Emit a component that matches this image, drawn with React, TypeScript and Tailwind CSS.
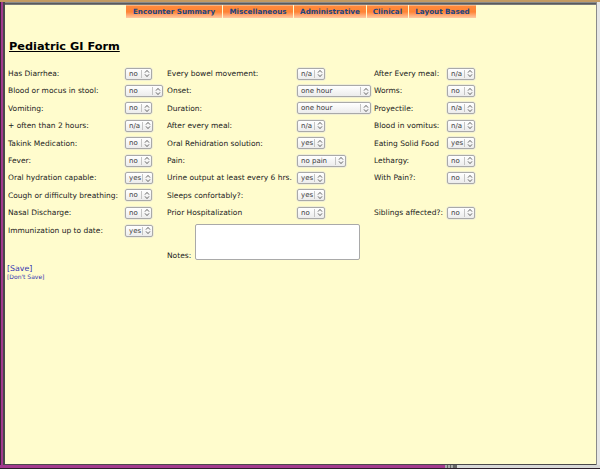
import React from "react";

const font = "font-['DejaVu_Sans',sans-serif]";

const tabs = [
  { label: "Encounter Summary", w: "w-[96px]" },
  { label: "Miscellaneous", w: "w-[70px]" },
  { label: "Administrative", w: "w-[72px]" },
  { label: "Clinical", w: "w-[41px]" },
  { label: "Layout Based", w: "w-[67px]" },
];

type Cell = { label: string; value: string; w: string } | null;

const rows: Cell[][] = [
  [
    { label: "Has Diarrhea:", value: "no", w: "w-[27px]" },
    { label: "Every bowel movement:", value: "n/a", w: "w-[28px]" },
    { label: "After Every meal:", value: "n/a", w: "w-[28px]" },
  ],
  [
    { label: "Blood or mocus in stool:", value: "no", w: "w-[38px]" },
    { label: "Onset:", value: "one hour", w: "w-[74px]" },
    { label: "Worms:", value: "no", w: "w-[28px]" },
  ],
  [
    { label: "Vomiting:", value: "no", w: "w-[27px]" },
    { label: "Duration:", value: "one hour", w: "w-[74px]" },
    { label: "Proyectile:", value: "n/a", w: "w-[28px]" },
  ],
  [
    { label: "+ often than 2 hours:", value: "n/a", w: "w-[28px]" },
    { label: "After every meal:", value: "n/a", w: "w-[28px]" },
    { label: "Blood in vomitus:", value: "n/a", w: "w-[28px]" },
  ],
  [
    { label: "Takink Medication:", value: "no", w: "w-[27px]" },
    { label: "Oral Rehidration solution:", value: "yes", w: "w-[28px]" },
    { label: "Eating Solid Food", value: "yes", w: "w-[28px]" },
  ],
  [
    { label: "Fever:", value: "no", w: "w-[27px]" },
    { label: "Pain:", value: "no pain", w: "w-[49px]" },
    { label: "Lethargy:", value: "no", w: "w-[28px]" },
  ],
  [
    { label: "Oral hydration capable:", value: "yes", w: "w-[28px]" },
    { label: "Urine output at least every 6 hrs.", value: "yes", w: "w-[28px]" },
    { label: "With Pain?:", value: "no", w: "w-[28px]" },
  ],
  [
    { label: "Cough or difficulty breathing:", value: "no", w: "w-[27px]" },
    { label: "Sleeps confortably?:", value: "yes", w: "w-[28px]" },
    null,
  ],
  [
    { label: "Nasal Discharge:", value: "no", w: "w-[27px]" },
    { label: "Prior Hospitalization", value: "no", w: "w-[28px]" },
    { label: "Siblings affected?:", value: "no", w: "w-[28px]" },
  ],
];

function Chevrons() {
  return (
    <svg width="6" height="9" viewBox="0 0 6 9" fill="none" stroke="#555" strokeWidth="0.9">
      <path d="M1 3.6 L3 1.4 L5 3.6" />
      <path d="M1 5.4 L3 7.6 L5 5.4" />
    </svg>
  );
}

function Select({ value, w }: { value: string; w: string }) {
  return (
    <div
      className={`${w} flex h-[12px] items-center rounded-[2px] border border-[#a9a9a9] bg-gradient-to-b from-white to-[#ececec] shadow-[0_0_0_0.5px_#e0e0e0]`}
    >
      <span className="flex-1 truncate pl-[3px] text-[7px] leading-[10px] text-[#3a3a3a]">{value}</span>
      <span className="h-[8px] w-px bg-[#c4c4c4]" />
      <span className="flex w-[9px] justify-center">
        <Chevrons />
      </span>
    </div>
  );
}

export default function App() {
  return (
    <div className={`${font} flex h-[469px] w-[600px] flex-col overflow-hidden bg-[#2b2b2b]`}>
      <div className="h-[2px] bg-[#c39a62]" />
      <div className="flex min-h-0 flex-1">
        <div className="w-px bg-[#3a2638]" />
        <div className="w-[2px] bg-[#a33a8e]" />
        <div className="w-[2px] bg-[#4a4a4a]" />
        <div className="flex min-w-0 flex-1 flex-col">
          <div className="h-px bg-[#8a8a8a]" />
          <div className="h-px bg-[#5a5a5a]" />
          <div className="h-px bg-[#7a7a7a]" />
          <div className="min-h-0 flex-1 bg-[#fffccd] px-[3px]">
            <div className="flex h-[13px] justify-center gap-px pl-[1px]">
              {tabs.map((t) => (
                <div
                  key={t.label}
                  className={`${t.w} flex items-center justify-center border-t border-[#ffb27a] bg-gradient-to-b from-[#ff8a3c] via-[#ff8434] to-[#ffc9a0] text-[7.2px] font-bold text-[#1d4582]`}
                >
                  {t.label}
                </div>
              ))}
            </div>

            <h1 className="ml-[1px] mt-[22px] text-[11.3px] font-bold leading-[14px] text-black underline">
              Pediatric GI Form
            </h1>

            <div className="mt-[11px] grid grid-cols-[117px_42px_130px_77px_73px_1fr] text-[7.5px] text-[#222]">
              {rows.map((row, i) =>
                row.map((c, j) =>
                  c ? (
                    <React.Fragment key={`${i}-${j}`}>
                      <div className="flex h-[17.4px] items-center whitespace-nowrap">{c.label}</div>
                      <div className="flex h-[17.4px] items-center">
                        <Select value={c.value} w={c.w} />
                      </div>
                    </React.Fragment>
                  ) : (
                    <React.Fragment key={`${i}-${j}`}>
                      <div />
                      <div />
                    </React.Fragment>
                  )
                )
              )}
              <div className="h-[39px] pt-[4px] leading-[9px]">Immunization up to date:</div>
              <div className="pt-[3px]">
                <Select value="yes" w="w-[28px]" />
              </div>
              <div className="col-span-4 flex items-start gap-[4px] pt-[2px]">
                <span className="self-end pb-[1px] leading-[9px]">Notes:</span>
                <div className="h-[36px] w-[165px] rounded-[2px] border border-[#a9a9a9] bg-white" />
              </div>
            </div>

            <div className="mt-[3px] -ml-[1px] leading-[9px] text-[#3030b0]">
              <div className="text-[7.8px]">[Save]</div>
              <div className="text-[6px] leading-[8px]">[Don't Save]</div>
            </div>
          </div>
          <div className="h-px bg-[#4a4a4a]" />
        </div>
        <div className="w-px bg-[#8a8a8a]" />
        <div className="w-[3px] bg-[#e6e6e6]" />
      </div>
      <div className="flex h-[3px]">
        <div className="w-[445px] bg-[#a33a8e]" />
        <div className="flex w-[12px] gap-px bg-[#666]">
          <div className="w-[2px] bg-[#aaa]" />
          <div className="w-[2px] bg-[#aaa]" />
          <div className="w-[2px] bg-[#aaa]" />
        </div>
        <div className="flex-1 bg-[#d8d8d8]" />
      </div>
      <div className="h-px bg-[#2b1f2a]" />
    </div>
  );
}
